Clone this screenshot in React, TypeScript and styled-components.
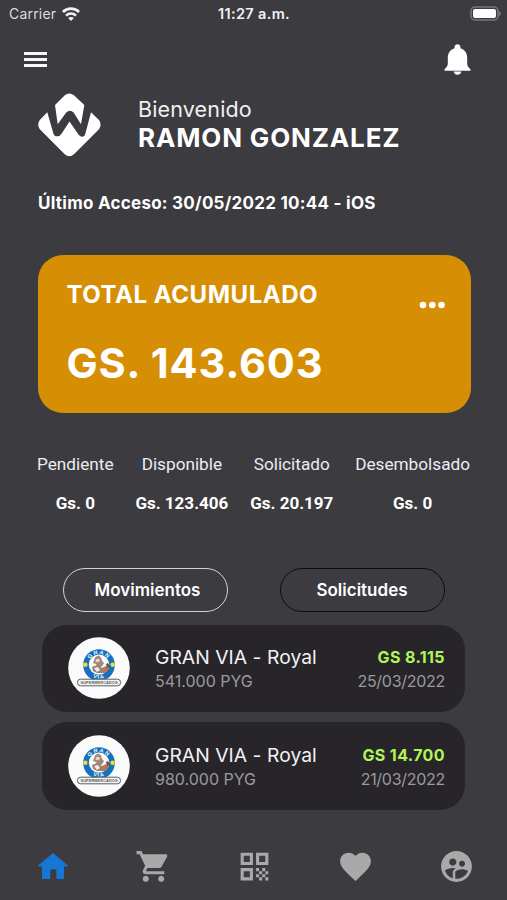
import React from "react";
import styled, { createGlobalStyle } from "styled-components";
import { MdShoppingCart, MdQrCode, MdFavorite, MdSupervisedUserCircle } from "react-icons/md";

const GlobalStyle = createGlobalStyle`
  * { box-sizing: border-box; }
  body { margin: 0; background: #3b3b40; }
  button { padding: 0; border: 0; background: none; color: inherit; font: inherit; letter-spacing: inherit; }
  svg { display: block; flex: none; }
`;

const Screen = styled.div`
  display: flex;
  flex-direction: column;
  width: 507px;
  height: 900px;
  overflow: hidden;
  background: #3b3b40;
  color: #fff;
  font-family: Inter, "Liberation Sans", sans-serif;
  white-space: nowrap;
`;

const StatusBar = styled.div`
  display: grid;
  grid-template-columns: 1fr auto 1fr;
  align-items: center;
  height: 27px;
  padding: 0 6px 0 9px;
  font-size: 14px;
`;

const Carrier = styled.div`
  display: flex;
  align-items: center;
  gap: 6px;
  color: #dcdcdf;
  letter-spacing: 0.2px;
`;

const Clock = styled.div`
  font-weight: 600;
  font-size: 14.5px;
  letter-spacing: 0.35px;
  color: #f1f1f3;
  padding-right: 2px;
`;

const StatusRight = styled.div`
  display: flex;
  justify-content: flex-end;
`;

const TopBar = styled.header`
  display: flex;
  align-items: center;
  justify-content: space-between;
  height: 63px;
  padding: 2px 36px 0 24px;
`;

const IconButton = styled.button`
  display: flex;
`;

const Profile = styled.section`
  display: flex;
  align-items: flex-start;
  height: 85px;
  padding: 3px 38px 0;
  gap: 36px;
`;

const Greeting = styled.div`
  display: flex;
  flex-direction: column;
  padding-top: 2.4px;
`;

const Welcome = styled.span`
  font-size: 21.5px;
  line-height: 28px;
  letter-spacing: 0.15px;
  color: #f0f0f2;
`;

const UserName = styled.span`
  font-size: 26px;
  line-height: 29px;
  font-weight: 700;
  letter-spacing: 0.85px;
`;

const LastAccess = styled.div`
  height: 80px;
  padding-left: 38px;
  padding-top: 16px;
  font-size: 17px;
  line-height: 24px;
  font-weight: 700;
  letter-spacing: 0.26px;
`;

const BalanceCard = styled.section`
  display: flex;
  justify-content: space-between;
  width: 433px;
  height: 157.5px;
  margin-left: 37.5px;
  padding: 25px 26px 0 29px;
  border-radius: 25px;
  background: #d68f05;
`;

const BalanceTitle = styled.div`
  font-size: 24px;
  line-height: 30px;
  font-weight: 700;
  letter-spacing: 0.54px;
`;

const BalanceAmount = styled.div`
  margin-top: 28px;
  font-size: 41.5px;
  line-height: 50px;
  font-weight: 700;
  letter-spacing: 0.9px;
`;

const MoreButton = styled(IconButton)`
  height: 8px;
  margin-top: 21px;
`;

const Stats = styled.section`
  display: flex;
  justify-content: space-between;
  height: 126.5px;
  padding: 41.5px 37px 0;
  font-family: Roboto, "Liberation Sans", sans-serif;
`;

const Stat = styled.div`
  display: flex;
  flex-direction: column;
  align-items: center;
  gap: 19px;
`;

const StatLabel = styled.span`
  font-size: 17.2px;
  line-height: 20px;
  color: #ededf0;
`;

const StatValue = styled.span`
  font-size: 17px;
  line-height: 20px;
  font-weight: 700;
`;

const Tabs = styled.div`
  display: flex;
  justify-content: space-between;
  height: 85.5px;
  padding: 28.5px 62.5px 0 63px;
`;

const Tab = styled.button<{ $active?: boolean }>`
  width: 165px;
  height: 44px;
  padding-left: ${(p) => (p.$active ? "4px" : "0")};
  border: 1.5px solid ${(p) => (p.$active ? "#d3d3d5" : "#0d0d10")};
  border-radius: 22px;
  font-size: 17px;
  font-weight: 600;
`;

const Movements = styled.div`
  display: flex;
  flex-direction: column;
  gap: 10px;
  padding: 0 42px;
`;

const Movement = styled.article`
  display: flex;
  align-items: center;
  height: 87.5px;
  padding: 0 20px 0 26px;
  border-radius: 25px;
  background: #272529;
`;

const MovementText = styled.div<{ $end?: boolean }>`
  display: flex;
  flex-direction: column;
  align-items: ${(p) => (p.$end ? "flex-end" : "flex-start")};
  margin-left: ${(p) => (p.$end ? "auto" : "25px")};
  padding-top: 1.5px;
`;

const Store = styled.span`
  font-size: 19.3px;
  line-height: 24px;
  letter-spacing: 0.04px;
  color: #f2f2f3;
`;

const Muted = styled.span<{ $tight?: boolean }>`
  font-size: 16px;
  line-height: 24px;
  letter-spacing: ${(p) => (p.$tight ? "-0.28px" : "0")};
  color: #9b9a9d;
`;

const Earned = styled.span`
  font-size: 16px;
  line-height: 24px;
  font-weight: 700;
  letter-spacing: 0.4px;
  color: #b0f55a;
`;

const BottomNav = styled.nav`
  display: flex;
  align-items: center;
  justify-content: space-around;
  height: 68px;
  margin-top: auto;
  color: #a9a9aa;
`;

const NavItem = styled.button<{ $active?: boolean }>`
  display: flex;
  justify-content: center;
  flex: 1;
  padding-left: ${(p) => (p.$active ? "2px" : "0")};
  color: ${(p) => (p.$active ? "#1577d2" : "inherit")};
`;

const Wifi = () => (
  <svg width="18" height="14" viewBox="0 0 18 14" fill="none" stroke="#f2f2f4" strokeWidth="2.8">
    <path d="M0.9 5C5.4 0.4 12.6 0.4 17.1 5" />
    <path d="M4 8.6C6.8 5.8 11.2 5.8 14 8.6" strokeWidth="2.5" />
    <path d="M9 14L6.1 11.1C7.7 9.7 10.3 9.7 11.9 11.1Z" fill="#f2f2f4" stroke="none" />
  </svg>
);

const Battery = () => (
  <svg width="31" height="15" viewBox="0 0 31 15">
    <rect x="1" y="1" width="27" height="13" rx="4" fill="none" stroke="#77777b" strokeWidth="1.5" />
    <rect x="3" y="3" width="23" height="9" rx="2" fill="#fff" />
    <path d="M29.2 5v5c1.8-.7 1.8-4.3 0-5z" fill="#88888c" />
  </svg>
);

const MenuIcon = () => (
  <svg width="23" height="17" viewBox="0 0 23 17" fill="#f4f7f8">
    <path d="M0 1h23v3H0zM0 7h23v3H0zM0 13h23v3H0z" />
  </svg>
);

const Bell = () => (
  <svg width="27" height="31" viewBox="0 0 27 31" fill="#fff">
    <path d="M10.6 2.9C10.6-.8 16.4-.8 16.4 2.9L16.5 4.3C21 5.7 23.2 9.5 23.2 14V19.8C23.3 22 24.4 23.5 26.2 24.9C27 25.8 26.7 26.7 25.6 26.7H1.4C.3 26.7 0 25.8.8 24.9C2.6 23.5 3.7 22 3.8 19.8V14C3.8 9.500 6 5.700 10.500 4.300Z" />
    <path d="M9.7 27.6H17.3C16.7 31.9 10.3 31.9 9.7 27.6Z" />
  </svg>
);

const HomeIcon = () => (
  <svg width="30" height="26" viewBox="0 0 30 26" fill="currentColor">
    <path d="M15 0L30 12.5L29.2 13.4H26V26H18.4V17.7Q18.4 16.2 16.9 16.2H13.7Q12.2 16.2 12.2 17.7V26H4V13.4H.8L0 12.5Z" />
  </svg>
);

const Brand = () => (
  <svg width="64" height="64" viewBox="0 0 64 64" fill="#fff">
    <path d="M17 12L26.5 2.6Q31.3-1.8 36.2 2.6L46.3 12L43 31.3L35.6 19.6Q32 16 28.2 19.6L19.7 31.3Z" />
    <path d="M9.3 19.3L1.8 27Q-1.4 31.5 1.8 36.3L26.5 61Q31.3 65.4 36.2 61L61 36.3Q64.2 31.5 61 27L53 19.3L47.4 40.6Q46.6 43.8 43.8 43.8Q41.8 43.6 40.3 41.2L31.5 28.4L23.7 40.4Q22 43.3 19.2 43.3Q16.4 43.3 15.4 40.4Z" />
  </svg>
);

const Dots = () => (
  <svg width="26" height="8" viewBox="0 0 26 8" fill="#fff">
    <circle cx="4" cy="4" r="3.3" />
    <circle cx="13.3" cy="4" r="3.3" />
    <circle cx="22.5" cy="4" r="3.3" />
  </svg>
);

const StoreLogo = () => (
  <svg width="62" height="62" viewBox="0 0 62 62">
    <defs>
      <path id="ringTop" d="M20.2 28a10.8 10.8 0 0 1 21.6 0" />
      <path id="ringBottom" d="M16.6 31a15 15 0 0 0 28.8 0" />
    </defs>
    <circle cx="31" cy="31" r="30.8" fill="#fafafa" />
    <circle cx="31" cy="28" r="15.8" fill="#1670bd" />
    <circle cx="31" cy="27.6" r="10.2" fill="#fbfaf7" />
    <g fill="#eef6fb" fontFamily="Liberation Sans, sans-serif" fontSize="5.6" fontWeight="700" textAnchor="middle">
      <text letterSpacing="1.3"><textPath href="#ringTop" startOffset="50%">GRAN</textPath></text>
      <text letterSpacing="1"><textPath href="#ringBottom" startOffset="50%">VIA</textPath></text>
    </g>
    <circle cx="17.4" cy="27.8" r="2.2" fill="#e8e12f" />
    <circle cx="44.6" cy="27.8" r="2.2" fill="#e8e12f" />
    <path d="M27 20.5q3.5-3.5 6 0l1 3.5 2 2-2 3.5-4 1-2-3.5-3-1z" fill="#a58878" />
    <path d="M28 22.5q3-1.8 4 1l-2 2-2.5-1z" fill="#ead9c7" />
    <path d="M24 30l5-2 5 3 4-2 3 3-4 4-8 0-4-2z" fill="#9c8272" />
    <path d="M26 31l4-1 2 3-3 2z" fill="#f4ece3" />
    <path d="M35 31l4-1 1 3-3 2z" fill="#d56f31" />
    <path d="M38 27l2-1 2 4-3 1z" fill="#5f534b" />
    <rect x="9.5" y="42.2" width="43" height="6.6" rx="3" fill="#f4f4f4" stroke="#5e5e61" strokeWidth="1" />
    <text x="12.5" y="47.1" fontFamily="Liberation Sans, sans-serif" fontSize="3.9" fontWeight="700" fill="#5b5b5e" textLength="37">
      SUPERMERCADOS
    </text>
  </svg>
);

const stats = [
  { label: "Pendiente", value: "Gs. 0" },
  { label: "Disponible", value: "Gs. 123.406" },
  { label: "Solicitado", value: "Gs. 20.197" },
  { label: "Desembolsado", value: "Gs. 0" },
];

const movements = [
  { store: "GRAN VIA - Royal", amount: "541.000 PYG", earned: "GS 8.115", date: "25/03/2022" },
  { store: "GRAN VIA - Royal", amount: "980.000 PYG", earned: "GS 14.700", date: "21/03/2022" },
];

const navIcons = [MdShoppingCart, MdQrCode, MdFavorite, MdSupervisedUserCircle];

export default function App() {
  return (
    <Screen>
      <GlobalStyle />
      <StatusBar>
        <Carrier>
          Carrier
          <Wifi />
        </Carrier>
        <Clock>11:27 a.m.</Clock>
        <StatusRight>
          <Battery />
        </StatusRight>
      </StatusBar>
      <TopBar>
        <IconButton aria-label="Menú">
          <MenuIcon />
        </IconButton>
        <IconButton aria-label="Notificaciones">
          <Bell />
        </IconButton>
      </TopBar>
      <Profile>
        <Brand />
        <Greeting>
          <Welcome>Bienvenido</Welcome>
          <UserName>RAMON GONZALEZ</UserName>
        </Greeting>
      </Profile>
      <LastAccess>Último Acceso: 30/05/2022 10:44 - iOS</LastAccess>
      <BalanceCard>
        <div>
          <BalanceTitle>TOTAL ACUMULADO</BalanceTitle>
          <BalanceAmount>GS. 143.603</BalanceAmount>
        </div>
        <MoreButton aria-label="Más opciones">
          <Dots />
        </MoreButton>
      </BalanceCard>
      <Stats>
        {stats.map((s) => (
          <Stat key={s.label}>
            <StatLabel>{s.label}</StatLabel>
            <StatValue>{s.value}</StatValue>
          </Stat>
        ))}
      </Stats>
      <Tabs>
        <Tab $active>Movimientos</Tab>
        <Tab>Solicitudes</Tab>
      </Tabs>
      <Movements>
        {movements.map((m) => (
          <Movement key={m.date}>
            <StoreLogo />
            <MovementText>
              <Store>{m.store}</Store>
              <Muted>{m.amount}</Muted>
            </MovementText>
            <MovementText $end>
              <Earned>{m.earned}</Earned>
              <Muted $tight>{m.date}</Muted>
            </MovementText>
          </Movement>
        ))}
      </Movements>
      <BottomNav>
        <NavItem $active>
          <HomeIcon />
        </NavItem>
        {navIcons.map((Icon, i) => (
          <NavItem key={i}>
            <Icon size={37} />
          </NavItem>
        ))}
      </BottomNav>
    </Screen>
  );
}
